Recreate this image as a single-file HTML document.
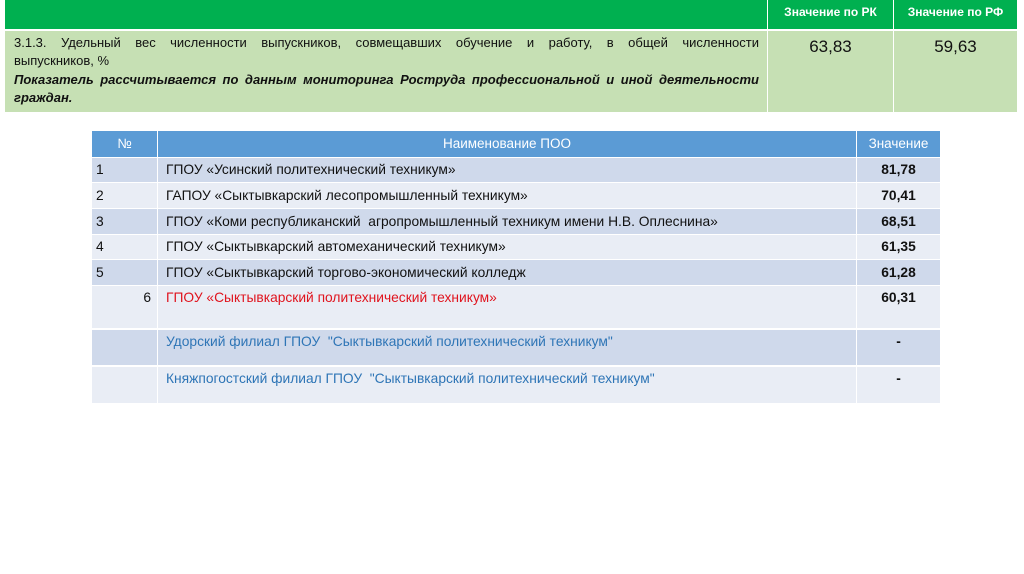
<!DOCTYPE html>
<html><head><meta charset="utf-8"><style>
body{margin:0;width:1024px;height:574px;background:#fff;position:relative;overflow:hidden;font-family:"Liberation Sans",sans-serif;}
.a{position:absolute;box-sizing:border-box;white-space:nowrap;}
.g{background:#00b050;}
.lg{background:#c6e0b4;}
.hd{background:#5b9bd5;color:#fff;font-size:13.5px;}
.d{background:#cfd9eb;}
.l{background:#e9edf5;}
.t{font-size:13.8px;color:#111;}
.j{text-align:justify;text-align-last:justify;white-space:nowrap;}
</style></head><body>
<div class="a g" style="left:5px;top:0;width:762px;height:29px"></div>
<div class="a g" style="left:768px;top:0;width:125px;height:29px;color:#fff;font-weight:bold;font-size:12px;text-align:center;line-height:24px">Значение по РК</div>
<div class="a g" style="left:894px;top:0;width:123px;height:29px;color:#fff;font-weight:bold;font-size:12px;text-align:center;line-height:24px">Значение по РФ</div>
<div class="a lg" style="left:5px;top:31px;width:762px;height:81px;padding:3px 8px 0 9px;font-size:13px;line-height:18.3px;color:#111;white-space:normal">
<div class="j">3.1.3. Удельный вес численности выпускников, совмещавших обучение и работу, в общей численности</div>
<div>выпускников, %</div>
<div class="j"><b><i>Показатель рассчитывается по данным мониторинга Роструда профессиональной и иной деятельности</i></b></div>
<div><b><i>граждан.</i></b></div>
</div>
<div class="a lg" style="left:768px;top:31px;width:125px;height:81px;text-align:center;font-size:17px;padding-top:6px;color:#111">63,83</div>
<div class="a lg" style="left:894px;top:31px;width:123px;height:81px;text-align:center;font-size:17px;padding-top:6px;color:#111">59,63</div>

<div class="a hd" style="left:92px;top:131px;width:65px;height:26px;text-align:center;line-height:26px">№</div>
<div class="a hd" style="left:158px;top:131px;width:698px;height:26px;text-align:center;line-height:26px">Наименование ПОО</div>
<div class="a hd" style="left:857px;top:131px;width:83px;height:26px;text-align:center;line-height:26px">Значение</div>

<div class="a d t" style="left:92px;top:158px;width:65px;height:24px;padding-left:4px;line-height:24px">1</div>
<div class="a d t" style="left:158px;top:158px;width:698px;height:24px;padding-left:8px;line-height:24px">ГПОУ «Усинский политехнический техникум»</div>
<div class="a d t" style="left:857px;top:158px;width:83px;height:24px;text-align:center;line-height:24px;font-weight:bold">81,78</div>

<div class="a l t" style="left:92px;top:183px;width:65px;height:25px;padding-left:4px;line-height:25px">2</div>
<div class="a l t" style="left:158px;top:183px;width:698px;height:25px;padding-left:8px;line-height:25px">ГАПОУ «Сыктывкарский лесопромышленный техникум»</div>
<div class="a l t" style="left:857px;top:183px;width:83px;height:25px;text-align:center;line-height:25px;font-weight:bold">70,41</div>

<div class="a d t" style="left:92px;top:209px;width:65px;height:25px;padding-left:4px;line-height:25px">3</div>
<div class="a d t" style="left:158px;top:209px;width:698px;height:25px;padding-left:8px;line-height:25px">ГПОУ «Коми республиканский&nbsp; агропромышленный техникум имени Н.В. Оплеснина»</div>
<div class="a d t" style="left:857px;top:209px;width:83px;height:25px;text-align:center;line-height:25px;font-weight:bold">68,51</div>

<div class="a l t" style="left:92px;top:235px;width:65px;height:24px;padding-left:4px;line-height:24px">4</div>
<div class="a l t" style="left:158px;top:235px;width:698px;height:24px;padding-left:8px;line-height:24px">ГПОУ «Сыктывкарский автомеханический техникум»</div>
<div class="a l t" style="left:857px;top:235px;width:83px;height:24px;text-align:center;line-height:24px;font-weight:bold">61,35</div>

<div class="a d t" style="left:92px;top:260px;width:65px;height:25px;padding-left:4px;line-height:25px">5</div>
<div class="a d t" style="left:158px;top:260px;width:698px;height:25px;padding-left:8px;line-height:25px">ГПОУ «Сыктывкарский торгово-экономический колледж</div>
<div class="a d t" style="left:857px;top:260px;width:83px;height:25px;text-align:center;line-height:25px;font-weight:bold">61,28</div>

<div class="a l t" style="left:92px;top:286px;width:65px;height:42px;padding-right:6px;text-align:right;line-height:24px">6</div>
<div class="a l t" style="left:158px;top:286px;width:698px;height:42px;padding-left:8px;line-height:24px;color:#e0141e">ГПОУ «Сыктывкарский политехнический техникум»</div>
<div class="a l t" style="left:857px;top:286px;width:83px;height:42px;text-align:center;line-height:24px;font-weight:bold">60,31</div>

<div class="a d t" style="left:92px;top:330px;width:65px;height:35px"></div>
<div class="a d t" style="left:158px;top:330px;width:698px;height:35px;padding-left:8px;line-height:24px;color:#2e75b6">Удорский филиал ГПОУ&nbsp; "Сыктывкарский политехнический техникум"</div>
<div class="a d t" style="left:857px;top:330px;width:83px;height:35px;text-align:center;line-height:24px;font-weight:bold">-</div>

<div class="a l t" style="left:92px;top:367px;width:65px;height:36px"></div>
<div class="a l t" style="left:158px;top:367px;width:698px;height:36px;padding-left:8px;line-height:24px;color:#2e75b6">Княжпогостский филиал ГПОУ&nbsp; "Сыктывкарский политехнический техникум"</div>
<div class="a l t" style="left:857px;top:367px;width:83px;height:36px;text-align:center;line-height:24px;font-weight:bold">-</div>
</body></html>
